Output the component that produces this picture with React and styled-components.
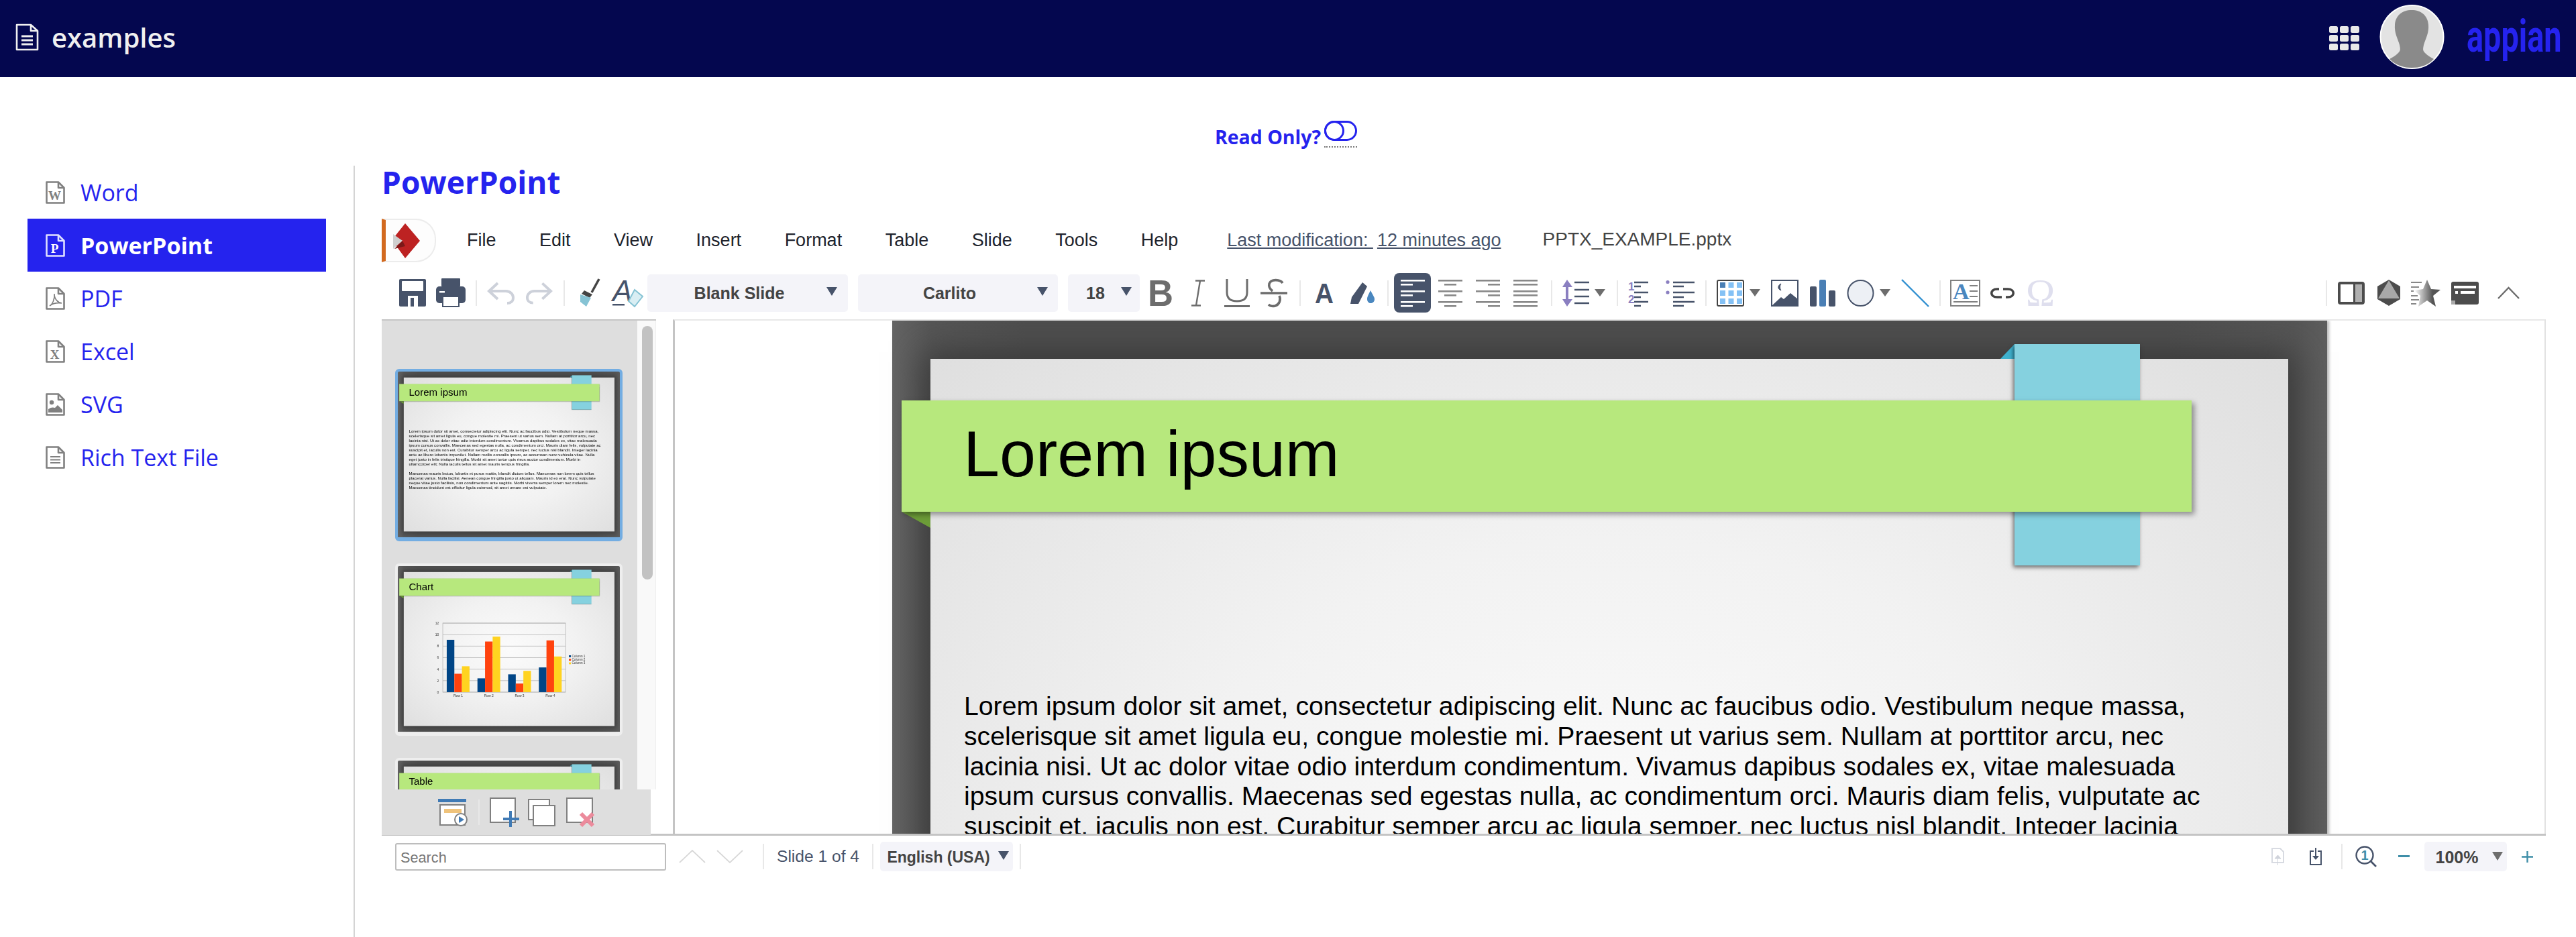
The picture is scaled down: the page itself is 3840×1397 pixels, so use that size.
import React from "react";
import styled, { createGlobalStyle } from "styled-components";

const BLUE = "#2523ee";
const SLATE = "#47536a";
const GREY = "#6d6d6d";
const SCALE = 0.1552;

const Global = createGlobalStyle`
  html, body { margin: 0; padding: 0; background: #fff; }
  body { font-family: "Open Sans", sans-serif; width: 3840px; height: 1397px; overflow: hidden; }
`;

const TopBar = styled.header`
  display: flex;
  align-items: center;
  height: 115px;
  box-sizing: border-box;
  background: #04074f;
  color: #f0f0f0;
  padding: 0 28px 5px 23px;
`;
const AppName = styled.div`
  font-size: 40px;
  font-weight: 600;
  margin-left: 19px;
  margin-right: auto;
`;
const GridIcon = styled.svg`
  display: block;
  margin-top: 4px;
`;
const Avatar = styled.svg`
  display: block;
  margin: 0 33px 0 30px;
`;
const Logo = styled.div`
  width: 135px;
  height: 70px;
  color: ${BLUE};
  font: bold 66px/70px "Roboto", sans-serif;
  transform: scaleX(0.71);
  transform-origin: 0 50%;
  white-space: nowrap;
`;
const ToggleRow = styled.div`
  display: flex;
  justify-content: center;
  align-items: center;
  height: 132px;
  padding: 46px 6px 0 0;
  box-sizing: border-box;
  color: ${BLUE};
  font-size: 28.5px;
  font-weight: 700;
  gap: 5px;
`;
const ToggleBox = styled.span`
  display: block;
  padding-bottom: 8px;
  margin-top: -8px;
  border-bottom: 2px dotted #777;
`;
const ToggleIcon = styled.svg`
  display: block;
`;
const Main = styled.div`
  display: flex;
`;
const Sidebar = styled.nav`
  width: 529px;
  height: 1150px;
  box-sizing: border-box;
  padding-left: 41px;
  border-right: 2px solid #d4d4d4;
  flex: none;
`;
const NavItem = styled.div`
  display: flex;
  align-items: center;
  width: 445px;
  height: 79px;
  padding-left: 27px;
  box-sizing: border-box;
  gap: 23px;
  font-size: 34px;
  font-weight: ${(p) => (p.$active ? 700 : 400)};
  color: ${(p) => (p.$active ? "#fff" : BLUE)};
  background: ${(p) => (p.$active ? BLUE : "transparent")};
`;
const Content = styled.main`
  width: 3226px;
  margin-left: 40px;
`;
const Title = styled.h1`
  margin: 0;
  height: 79px;
  font-size: 46px;
  line-height: 48px;
  font-weight: 700;
  color: ${BLUE};
`;
const MenuRow = styled.div`
  display: flex;
  align-items: center;
  height: 65px;
  font: 27px "Liberation Sans", sans-serif;
  color: #20232c;
`;
const BrandTab = styled.div`
  display: flex;
  align-items: center;
  justify-content: center;
  width: 81px;
  height: 65px;
  box-sizing: border-box;
  background: #fdfdfd;
  border: 2px solid #ececec;
  border-left: 6px solid #d2691e;
  border-radius: 0 30px 30px 0;
  padding-right: 12px;
`;
const MenuList = styled.div`
  display: flex;
  gap: 64.5px;
  margin-left: 46px;
`;
const Modified = styled.div`
  margin-left: 73px;
  color: ${SLATE};
  & u + u { margin-left: 6px; }
`;
const FileName = styled.div`
  margin-left: 62px;
  margin-top: -4px;
  font-size: 28px;
  color: #444;
`;
const ToolBar = styled.div`
  display: flex;
  align-items: center;
  height: 85px;
  padding: 6px 39px 0 0;
  box-sizing: border-box;
`;
const Ico = styled.svg`
  display: block;
  flex: none;
  overflow: visible;
  margin-left: ${(p) => p.$ml || 0}px;
`;
const Sep = styled.div`
  flex: none;
  width: 2px;
  height: ${(p) => p.$h || 38}px;
  background: #e8e8e8;
  margin-left: ${(p) => p.$ml || 0}px;
`;
const Combo = styled.div`
  display: flex;
  align-items: center;
  justify-content: center;
  flex: none;
  position: relative;
  width: ${(p) => p.$w}px;
  height: ${(p) => p.$h || 56}px;
  margin-left: ${(p) => p.$ml || 0}px;
  padding: 2px ${(p) => p.$pr || 0}px 0 0;
  box-sizing: border-box;
  background: #f4f4f9;
  border-radius: 5px;
  font: bold ${(p) => p.$fs || 25}px "Liberation Sans", sans-serif;
  color: #444;
`;
const Caret = styled.span`
  position: absolute;
  right: ${(p) => p.$r}px;
  top: ${(p) => p.$t || 19}px;
  border-style: solid;
  border-width: 13px 8px 0;
  border-color: ${(p) => p.$c || SLATE} transparent transparent;
`;
const SmallCaret = styled.span`
  flex: none;
  margin-left: ${(p) => p.$ml || 0}px;
  border-style: solid;
  border-width: 11px 8px 0;
  border-color: ${GREY} transparent transparent;
`;
const Spacer = styled.div`
  margin-left: auto;
`;
const ActiveAlign = styled.div`
  display: flex;
  justify-content: center;
  align-items: center;
  flex: none;
  width: 55px;
  height: 59px;
  margin-left: ${(p) => p.$ml}px;
  background: ${SLATE};
  border-radius: 8px;
`;
const Work = styled.div`
  display: flex;
  height: 767px;
  border-bottom: 3px solid #c4c4c4;
`;
const Panel = styled.div`
  display: grid;
  grid-template-columns: 381px 28px;
  grid-template-rows: 699px 68px;
  width: 409px;
  flex: none;
  border-top: 2px solid #c6c6c6;
  box-sizing: border-box;
`;
const Thumbs = styled.div`
  background: #dedede;
  padding: 72px 0 0 20px;
  overflow: hidden;
  display: flex;
  flex-direction: column;
  gap: 33px;
`;
const Track = styled.div`
  background: #f9f9f9;
  border-right: 1px solid #eee;
  padding: 8px 0 0 7px;
`;
const Thumb = styled.div`
  flex: none;
  width: 339px;
  height: 257px;
  box-sizing: border-box;
  background: ${(p) => (p.$active ? "#73ade2" : "#eeeeee")};
  border-radius: 6px;
  border: 4px solid ${(p) => (p.$active ? "#73ade2" : "#eeeeee")};
  overflow: hidden;
  filter: blur(0.35px);
`;
const ThumbScale = styled.div`
  width: 2139px;
  transform: scale(${SCALE});
  transform-origin: 0 0;
`;
const ThumbBar = styled.div`
  width: 16px;
  height: 378px;
  border-radius: 8px;
  background: #c2c2c2;
`;
const PanelFoot = styled.div`
  grid-column: 1 / 2;
  background: #dedede;
  display: flex;
  align-items: center;
  padding-left: 84px;
  width: 401px;
  box-sizing: border-box;
`;
const Canvas = styled.div`
  flex: 1;
  margin-left: 25px;
  display: flex;
  justify-content: center;
  overflow: hidden;
  border-left: 3px solid #c4c4c4;
  border-right: 2px solid #e2e2e2;
  border-top: 2px solid #e8e8e8;
`;
const Slide = styled.div`
  position: relative;
  flex: none;
  width: 2139px;
  height: 1591px;
  font-family: "Liberation Sans", sans-serif;
  color: #000;
  background: linear-gradient(90deg, #646464 0, #555 60px, #4e4e4e 200px, #4e4e4e 1900px, #555 2090px, #5e5e5e 100%);
  box-shadow: 3px 0 4px #bbb;
`;
const Page = styled.div`
  position: absolute;
  left: 57px;
  top: 57px;
  right: 58px;
  bottom: 55px;
  background: radial-gradient(ellipse at 50% 50%, #fbfbfb 0%, #f2f2f2 45%, #dfdfdf 100%);
  box-shadow: 0 0 44px 10px #3a3a3a;
`;
const GreenBand = styled.div`
  position: absolute;
  left: 14px;
  top: 119px;
  width: 1923px;
  height: 166px;
  box-sizing: border-box;
  padding-left: 92px;
  background: #b7e87d;
  box-shadow: 4px 4px 8px rgba(0, 0, 0, 0.4);
  font-size: 97px;
  line-height: 160px;
`;
const BlueRibbon = styled.div`
  position: absolute;
  left: 1673px;
  top: 35px;
  width: 187px;
  height: 330px;
  background: #85d1df;
  box-shadow: -2px 3px 6px rgba(0, 0, 0, 0.55);
`;
const Fold = styled.svg`
  position: absolute;
  left: ${(p) => p.$x}px;
  top: ${(p) => p.$y}px;
`;
const Body = styled.div`
  position: absolute;
  left: 107px;
  top: 553px;
  font-size: 39.2px;
  line-height: 44.8px;
  white-space: nowrap;
  & p { margin: 0 0 45px; }
  & span { display: block; }
`;
const ChartWrap = styled.svg`
  position: absolute;
  left: 0;
  top: 0;
`;
const Status = styled.div`
  display: flex;
  align-items: center;
  height: 54px;
  padding: 8px 19px 0 20px;
  box-sizing: border-box;
  font: 24.6px "Liberation Sans", sans-serif;
`;
const Search = styled.div`
  flex: none;
  width: 404px;
  height: 41px;
  box-sizing: border-box;
  padding-left: 6px;
  border: 2px solid #bdbdbd;
  border-radius: 3px;
  color: #777;
  font-size: 21.7px;
  line-height: 39px;
`;
const SlideCount = styled.div`
  margin-left: 19px;
  color: ${SLATE};
`;

// the slide keeps the line breaks of the presentation
const paragraphs = [
  [
    "Lorem ipsum dolor sit amet, consectetur adipiscing elit. Nunc ac faucibus odio. Vestibulum neque massa,",
    "scelerisque sit amet ligula eu, congue molestie mi. Praesent ut varius sem. Nullam at porttitor arcu, nec",
    "lacinia nisi. Ut ac dolor vitae odio interdum condimentum. Vivamus dapibus sodales ex, vitae malesuada",
    "ipsum cursus convallis. Maecenas sed egestas nulla, ac condimentum orci. Mauris diam felis, vulputate ac",
    "suscipit et, iaculis non est. Curabitur semper arcu ac ligula semper, nec luctus nisl blandit. Integer lacinia",
    "ante ac libero lobortis imperdiet. Nullam mollis convallis ipsum, ac accumsan nunc vehicula vitae. Nulla",
    "eget justo in felis tristique fringilla. Morbi sit amet tortor quis risus auctor condimentum. Morbi in",
    "ullamcorper elit; Nulla iaculis tellus sit amet mauris tempus fringilla.",
  ],
  [
    "Maecenas mauris lectus, lobortis et purus mattis, blandit dictum tellus. Maecenas non lorem quis tellus",
    "placerat varius. Nulla facilisi. Aenean congue fringilla justo ut aliquam. Mauris id ex erat. Nunc vulputate",
    "neque vitae justo facilisis, non condimentum ante sagittis. Morbi viverra semper lorem nec molestie.",
    "Maecenas tincidunt est efficitur ligula euismod, sit amet ornare est vulputate.",
  ],
];

const chartData = [
  ["Row 1", 9.1, 3.2, 4.5],
  ["Row 2", 2.4, 8.8, 9.65],
  ["Row 3", 3.1, 1.5, 3.7],
  ["Row 4", 4.3, 9, 6.2],
];
const chartColors = ["#004586", "#ff420e", "#ffd320"];

function BodyText() {
  return (
    <Body>
      {paragraphs.map((para) => (
        <p key={para[0]}>
          {para.map((line) => <span key={line}>{line}</span>)}
        </p>
      ))}
    </Body>
  );
}

function Chart() {
  const y = (v) => 1211 - v * 55.25;
  return (
    <ChartWrap width="2139" height="1591" viewBox="0 0 2139 1591">
      {[0, 2, 4, 6, 8, 10, 12].map((v) => (
        <g key={v}>
          <line x1="432" x2="1611" y1={y(v)} y2={y(v)} stroke="#b3b3b3" strokeWidth="5" />
          <text x="395" y={y(v) + 12} fontSize="32" fill="#333" textAnchor="end">{v}</text>
        </g>
      ))}
      <rect x="432" y="548" width="1179" height="663" fill="none" stroke="#b3b3b3" strokeWidth="5" />
      {chartData.map((row, i) => (
        <g key={row[0]}>
          {row.slice(1).map((v, j) => (
            <rect key={j} x={470 + i * 295 + j * 73} y={y(v)} width="73" height={v * 55.25} fill={chartColors[j]} />
          ))}
          <text x={580 + i * 295} y="1258" fontSize="32" fill="#333" textAnchor="middle">{row[0]}</text>
        </g>
      ))}
      {chartColors.map((c, i) => (
        <g key={c}>
          <rect x="1643" y={857 + i * 34} width="20" height="18" fill={c} />
          <text x="1672" y={875 + i * 34} fontSize="30" fill="#333">Column {i + 1}</text>
        </g>
      ))}
    </ChartWrap>
  );
}

function SlideView({ title, children }) {
  return (
    <Slide>
      <Page />
      <Fold $x={1652} $y={35} width="21" height="22" viewBox="0 0 21 22">
        <polygon points="21,0 21,22 0,22" fill="#3fb2cf" />
      </Fold>
      <BlueRibbon />
      <Fold $x={14} $y={285} width="43" height="24" viewBox="0 0 43 24">
        <polygon points="0,0 43,0 43,24" fill="#6c9c38" />
      </Fold>
      <GreenBand>{title}</GreenBand>
      {children}
    </Slide>
  );
}

function DocIcon({ color, children }) {
  return (
    <Ico width="29" height="34" viewBox="0 0 29 34">
      <path d="M1.5 1.5H19L27.5 10V32.5H1.5Z M19 1.5V10H27.5" fill="none" stroke={color} strokeWidth="2.6" strokeLinejoin="round" />
      {children}
    </Ico>
  );
}

const Letter = ({ color, children }) => (
  <text x="13.5" y="28" textAnchor="middle" fontSize="19" fontWeight="bold" fontFamily="Liberation Serif, serif" fill={color}>{children}</text>
);

const nav = [
  ["Word", <Letter color="#808080">W</Letter>],
  ["PowerPoint", <Letter color="#fff">P</Letter>],
  ["PDF", <path d="M6 28C10 26 14 18 13 10C13 18 18 23 24 24C17 23 10 25 6 28Z" fill="none" stroke="#808080" strokeWidth="1.6" />],
  ["Excel", <Letter color="#808080">X</Letter>],
  ["SVG", <g fill="#808080"><circle cx="9" cy="14" r="3.2" /><path d="M4 29V24C8 21 11 21 14 22L18 18L25 25V29Z" /></g>],
  ["Rich Text File", <path d="M7 16H22M7 20.5H22M7 25H22" stroke="#808080" strokeWidth="1.8" />],
];

const AlignLines = ({ color, kind }) => {
  const rows = [1, 7, 17, 23, 33, 39];
  return (
    <Ico $ml={kind.ml} width="36" height="40" viewBox="0 0 36 40">
      {rows.map((r, i) => {
        const long = i % 2 === 0 || kind.name === "justify";
        const w = long ? 36 : 18;
        const x = kind.name === "left" ? 0 : kind.name === "center" ? (36 - w) / 2 : kind.name === "right" ? 36 - w : 0;
        return <rect key={r} x={x} y={r - 1} width={w} height="2.6" fill={color} />;
      })}
    </Ico>
  );
};

export default function App() {
  return (
    <>
      <Global />
      <TopBar>
        <svg width="35" height="41" viewBox="0 0 35 41">
          <path d="M2 2H23L33 11V39H2Z M23 2V11H33" fill="none" stroke="#f0f0f0" strokeWidth="2.6" strokeLinejoin="round" />
          <path d="M9 19H26M9 25H26M9 31H26" stroke="#f0f0f0" strokeWidth="3" />
        </svg>
        <AppName>examples</AppName>
        <GridIcon width="45" height="36" viewBox="0 0 45 36">
          {[0, 1, 2].map((r) =>
            [0, 1, 2].map((c) => <rect key={`${r}${c}`} x={c * 16} y={r * 13} width="13" height="10" rx="2.5" fill="#e9e9e9" />)
          )}
        </GridIcon>
        <Avatar width="97" height="96" viewBox="0 0 97 96">
          <circle cx="48.5" cy="48" r="47" fill="#e3e3e3" stroke="#fff" strokeWidth="2" />
          <path d="M48 8C34 8 24 16 23 30C22 42 27 50 30 60C31 66 32 68 28 72C24 76 20 78 15 81C25 91 37 94 48 94C60 94 72 91 81 81C76 78 72 76 68 72C64 68 65 66 66 60C69 50 74 42 73 30C72 16 62 8 48 8Z" fill="#8a8a8a" />
        </Avatar>
        <Logo>appian</Logo>
      </TopBar>

      <ToggleRow>
        Read Only?
        <ToggleBox>
          <ToggleIcon width="49" height="30" viewBox="0 0 49 30">
            <rect x="1.5" y="1.5" width="46" height="27" rx="13.5" fill="none" stroke={BLUE} strokeWidth="3" />
            <circle cx="15" cy="15" r="13.5" fill="none" stroke={BLUE} strokeWidth="3" />
          </ToggleIcon>
        </ToggleBox>
      </ToggleRow>

      <Main>
        <Sidebar>
          {nav.map(([label, glyph]) => (
            <NavItem key={label} $active={label === "PowerPoint"}>
              <DocIcon color={label === "PowerPoint" ? "#dfe0ff" : "#808080"}>{glyph}</DocIcon>
              {label}
            </NavItem>
          ))}
        </Sidebar>

        <Content>
          <Title>PowerPoint</Title>

          <MenuRow>
            <BrandTab>
              <svg width="40" height="52" viewBox="0 0 40 52">
                <polygon points="18,0 40,26 18,52 2,30 14,26 2,20" fill="#bd2222" />
                <polygon points="0,16 14,26 0,38" fill="#cfcfcf" />
                <polygon points="14,26 18,34 2,38" fill="#7c1818" />
              </svg>
            </BrandTab>
            <MenuList>
              <span>File</span>
              <span>Edit</span>
              <span>View</span>
              <span>Insert</span>
              <span>Format</span>
              <span>Table</span>
              <span>Slide</span>
              <span>Tools</span>
              <span>Help</span>
            </MenuList>
            <Modified>
              <u>Last modification: </u>
              <u>12 minutes ago</u>
            </Modified>
            <FileName>PPTX_EXAMPLE.pptx</FileName>
          </MenuRow>

          <ToolBar>
            <Ico $ml={26} width="40" height="41" viewBox="0 0 40 41">
              <rect width="40" height="41" rx="2" fill={SLATE} />
              <rect x="4" y="3" width="32" height="15" rx="1" fill="#fff" />
              <rect x="13" y="25" width="15" height="16" fill="#fff" />
              <rect x="17" y="28" width="5" height="13" fill={SLATE} />
            </Ico>
            <Ico $ml={15} width="44" height="43" viewBox="0 0 44 43">
              <rect x="8" width="28" height="12" rx="1" fill={SLATE} />
              <rect y="12" width="44" height="25" rx="5" fill={SLATE} />
              <rect x="5" y="19" width="8" height="2.5" fill="#fff" />
              <rect x="10" y="27" width="24" height="15" fill="#fff" stroke={SLATE} strokeWidth="2" />
            </Ico>
            <Sep $ml={15} />
            <Ico $ml={14} width="43" height="36" viewBox="0 0 43 36">
              <path d="M17 3L4 15L17 27M4 15H29C36 15 40 20 40 25C40 30 36 33 31 33" fill="none" stroke="#cdd1da" strokeWidth="4" />
            </Ico>
            <Ico $ml={15} width="42" height="36" viewBox="0 0 43 36">
              <path d="M26 3L39 15L26 27M39 15H14C7 15 3 20 3 25C3 30 7 33 12 33" fill="none" stroke="#cdd1da" strokeWidth="4" />
            </Ico>
            <Sep $ml={15} />
            <Ico $ml={21} width="32" height="41" viewBox="0 0 32 41">
              <path d="M30 0L19 20" stroke="#444" strokeWidth="3.5" />
              <polygon points="8,17 20,23 16,28 4,22" fill="#444" />
              <polygon points="2,23 18,28 11,41 2,34" fill="#86c3d4" />
            </Ico>
            <Ico $ml={18} width="45" height="41" viewBox="0 0 45 41">
              <text x="0" y="33" fontSize="44" fontStyle="italic" fontFamily="Liberation Sans, sans-serif" fill={SLATE}>A</text>
              <rect x="0" y="37" width="18" height="2.5" fill={SLATE} />
              <polygon points="33,16 45,26 33,41 24,33" fill="#d9eef3" stroke="#86c3d4" strokeWidth="2" />
            </Ico>
            <Combo $ml={7} $w={299} $pr={25}>Blank Slide<Caret $r={16} /></Combo>
            <Combo $ml={15} $w={298} $pr={25}>Carlito<Caret $r={15} /></Combo>
            <Combo $ml={15} $w={107} $pr={25}>18<Caret $r={12} /></Combo>
            <Ico $ml={14} width="34" height="40" viewBox="0 0 34 40">
              <text x="-2" y="39" fontSize="55" fontWeight="bold" textLength="38" lengthAdjust="spacingAndGlyphs" fontFamily="Liberation Sans, sans-serif" fill={GREY}>B</text>
            </Ico>
            <Ico $ml={29} width="20" height="40" viewBox="0 0 20 40">
              <path d="M6 1.5H20M0 38.5H14M13 1.5L7 38.5" stroke={GREY} strokeWidth="2.4" fill="none" />
            </Ico>
            <Ico $ml={29} width="38" height="42" viewBox="0 0 38 42">
              <path d="M4 0V20C4 30 11 33 19 33C27 33 34 30 34 20V0M0 40.5H38" stroke={GREY} strokeWidth="3" fill="none" />
            </Ico>
            <Ico $ml={16} width="40" height="42" viewBox="0 0 40 42">
              <path d="M33 6C30 1 16 -1 13 7C12 11 14 15 18 18M0 21H40M28 25C31 31 28 38 22 40C18 41 14 40 12 38" stroke={GREY} strokeWidth="3.6" fill="none" />
            </Ico>
            <Sep $ml={18} />
            <Ico $ml={21} width="28" height="32" viewBox="0 0 28 32">
              <text x="14" y="31" fontSize="42" textAnchor="middle" fontWeight="bold" textLength="28" lengthAdjust="spacingAndGlyphs" fontFamily="Liberation Sans, sans-serif" fill={SLATE}>A</text>
            </Ico>
            <Ico $ml={25} width="36" height="32" viewBox="0 0 36 32">
              <polygon points="18,0 25,6 12,32 0,32 2,22" fill={SLATE} />
              <path d="M30 12C26 20 25 22 25 25C25 29 28 31 30 31C33 31 36 29 36 25C36 22 34 20 30 12Z" fill="#4a87bf" />
            </Ico>
            <Sep $ml={19} />
            <ActiveAlign $ml={8}>
              <AlignLines color="#fff" kind={{ name: "left" }} />
            </ActiveAlign>
            <AlignLines color="#888" kind={{ name: "center", ml: 11 }} />
            <AlignLines color="#888" kind={{ name: "right", ml: 20 }} />
            <AlignLines color="#888" kind={{ name: "justify", ml: 20 }} />
            <Sep $ml={20} />
            <Ico $ml={15} width="40" height="40" viewBox="0 0 40 40">
              <path d="M7 0L15 11H9V29H15L7 40L0 29H5V11H0Z" fill="#8a7fc0" />
              <path d="M18 4H40M18 15H40M18 25H40M18 35H40" stroke={SLATE} strokeWidth="2.6" />
            </Ico>
            <SmallCaret $ml={8} />
            <Sep $ml={17} />
            <Ico $ml={15} width="49" height="40" viewBox="0 0 49 40">
              <text x="0" y="16" fontSize="17" fontWeight="bold" fontFamily="Liberation Sans, sans-serif" fill="#8a7fc0">1</text>
              <text x="0" y="35" fontSize="17" fontWeight="bold" fontFamily="Liberation Sans, sans-serif" fill="#8a7fc0">2</text>
              <path d="M9 4H30M9 10H19M9 19H30M9 26H19M9 33H30M9 39H19" stroke={SLATE} strokeWidth="2.4" />
            </Ico>
            <Ico $ml={7} width="43" height="40" viewBox="0 0 43 40">
              <circle cx="3" cy="3.5" r="2.6" fill="#8a7fc0" />
              <circle cx="3" cy="19" r="2.6" fill="#8a7fc0" />
              <path d="M11 4H43M11 10H27M11 19H43M11 26H27M11 33H43M11 39H27" stroke={SLATE} strokeWidth="2.4" />
            </Ico>
            <Sep $ml={16} />
            <Ico $ml={15} width="41" height="40" viewBox="0 0 41 40">
              <rect x="1" y="1" width="39" height="38" rx="2" fill="#fff" stroke="#444" strokeWidth="2" />
              {[0, 1, 2].map((r) =>
                [0, 1, 2].map((c) => (
                  <rect key={`${r}${c}`} x={5 + c * 12.5} y={4 + r * 12} width="8" height="8" fill={r + c === 0 ? "#4a7fb5" : "#84c1f5"} />
                ))
              )}
            </Ico>
            <SmallCaret $ml={8} />
            <Ico $ml={16} width="41" height="40" viewBox="0 0 41 40">
              <rect x="1" y="1" width="39" height="38" fill="#fff" stroke={SLATE} strokeWidth="2" />
              <path d="M1 39L15 26L19 29L29 20L40 29V39Z" fill={SLATE} />
              <path d="M15 6C10 8 9 14 15 16C13 13 13 9 15 6Z" fill={SLATE} stroke={SLATE} />
            </Ico>
            <Ico $ml={17} width="39" height="40" viewBox="0 0 39 40">
              <rect y="10" width="10" height="30" rx="2" fill={SLATE} />
              <rect x="14" width="10" height="40" rx="2" fill="#4a7fb5" />
              <rect x="28" y="16" width="10" height="24" rx="2" fill={SLATE} />
            </Ico>
            <Ico $ml={16} width="41" height="40" viewBox="0 0 41 40">
              <circle cx="20.5" cy="20" r="19" fill="#edf0f5" stroke={SLATE} strokeWidth="2" />
            </Ico>
            <SmallCaret $ml={8} />
            <Ico $ml={17} width="40" height="40" viewBox="0 0 40 40">
              <path d="M0 0L40 40" stroke="#2f8fd0" strokeWidth="2.4" />
            </Ico>
            <Sep $ml={16} />
            <Ico $ml={14} width="45" height="40" viewBox="0 0 45 40">
              <rect x="1" y="1" width="43" height="38" fill="#fff" stroke="#808080" strokeWidth="2" />
              <text x="4" y="29" fontSize="34" fontWeight="bold" fontFamily="Liberation Serif, serif" fill="#4a87bf">A</text>
              <path d="M29 9H41M29 17H41M29 25H41M5 33H41" stroke="#808080" strokeWidth="2" />
            </Ico>
            <Ico $ml={15} width="36" height="18" viewBox="0 0 36 18">
              <path d="M13 3H10C-1 3 -1 15 10 15H17M23 15H26C37 15 37 3 26 3H19" fill="none" stroke="#444" strokeWidth="3.6" />
            </Ico>
            <Ico $ml={18} width="41" height="40" viewBox="0 0 41 40">
              <text x="20.5" y="39" fontSize="58" textAnchor="middle" fontFamily="Liberation Serif, serif" fill="#dfdfee">Ω</text>
            </Ico>
            <Spacer />
            <Sep />
            <Ico $ml={16} width="40" height="34" viewBox="0 0 40 34">
              <rect x="2" y="2" width="36" height="30" rx="2" fill="#fff" stroke="#4c4c4c" strokeWidth="4" />
              <rect x="26" y="4" width="10" height="26" fill="#b0b0b0" />
              <rect x="23" y="2" width="3" height="30" fill="#4c4c4c" />
            </Ico>
            <Ico $ml={19} width="34" height="39" viewBox="0 0 34 39">
              <polygon points="17,0 34,10 34,29 17,39 0,29 0,10" fill="#4c4c4c" />
              <polygon points="17,1 33,28 1,28" fill="#a8a8a8" />
            </Ico>
            <Ico $ml={16} width="44" height="40" viewBox="0 0 44 40">
              <defs>
                <linearGradient id="starFade" x1="0" x2="1" y1="0" y2="0">
                  <stop offset="0" stopColor="#fff" />
                  <stop offset="0.7" stopColor="#555" />
                </linearGradient>
              </defs>
              <path d="M0 4H16M0 11H12M0 17H4M0 24H10M0 30H12M0 36H8" stroke="#888" strokeWidth="2" />
              <polygon points="24,0 30,14 44,15 33,24 37,40 24,31 11,40 14,24 5,16 18,14" fill="url(#starFade)" />
            </Ico>
            <Ico $ml={16} width="41" height="34" viewBox="0 0 41 34">
              <rect width="41" height="34" rx="3" fill="#4c4c4c" />
              <rect x="4" y="6" width="33" height="4" fill="#fff" />
              <rect x="6" y="14" width="4" height="4" fill="#fff" />
              <rect x="14" y="14" width="21" height="4" fill="#fff" />
              <rect y="28" width="6" height="6" fill="#aaa" />
            </Ico>
            <Ico $ml={28} width="33" height="19" viewBox="0 0 33 19">
              <path d="M1 18L16.5 2L32 18" fill="none" stroke="#6d6d6d" strokeWidth="2.4" />
            </Ico>
          </ToolBar>

          <Work>
            <Panel>
              <Thumbs>
                <Thumb $active>
                  <ThumbScale>
                    <SlideView title="Lorem ipsum"><BodyText /></SlideView>
                  </ThumbScale>
                </Thumb>
                <Thumb>
                  <ThumbScale>
                    <SlideView title="Chart"><Chart /></SlideView>
                  </ThumbScale>
                </Thumb>
                <Thumb>
                  <ThumbScale>
                    <SlideView title="Table" />
                  </ThumbScale>
                </Thumb>
              </Thumbs>
              <Track><ThumbBar /></Track>
              <PanelFoot>
                <Ico width="45" height="41" viewBox="0 0 45 41">
                  <rect width="42" height="5" fill="#3f7ab5" />
                  <rect x="3" y="9" width="37" height="30" fill="#fff" stroke="#808080" strokeWidth="2" />
                  <rect x="9" y="15" width="26" height="6" fill="#efc37c" />
                  <circle cx="34" cy="31" r="9" fill="#fff" stroke="#808080" strokeWidth="2" />
                  <polygon points="31,26 39,31 31,36" fill="#3f7ab5" />
                </Ico>
                <Sep $ml={15} $h={38} />
                <Ico $ml={15} width="45" height="44" viewBox="0 0 45 44">
                  <rect x="1" y="1" width="37" height="36" fill="#fff" stroke="#808080" strokeWidth="2" />
                  <path d="M31 20V44M20 32H44" stroke="#3f7ab5" strokeWidth="4" />
                </Ico>
                <Ico $ml={12} width="41" height="41" viewBox="0 0 41 41">
                  <rect x="1" y="1" width="31" height="30" fill="#fff" stroke="#808080" strokeWidth="2" />
                  <rect x="8" y="10" width="32" height="30" fill="#fff" stroke="#808080" strokeWidth="2" />
                </Ico>
                <Ico $ml={16} width="42" height="44" viewBox="0 0 42 44">
                  <rect x="1" y="1" width="38" height="36" fill="#fff" stroke="#808080" strokeWidth="2" />
                  <path d="M22 24L40 42M40 24L22 42" stroke="#ec8b9c" strokeWidth="6" />
                </Ico>
              </PanelFoot>
            </Panel>
            <Canvas>
              <SlideView title="Lorem ipsum"><BodyText /></SlideView>
            </Canvas>
          </Work>

          <Status>
            <Search>Search</Search>
            <Ico $ml={19} width="40" height="20" viewBox="0 0 40 20">
              <path d="M1 19L20 1L39 19" fill="none" stroke="#d8d8d8" strokeWidth="1.8" />
            </Ico>
            <Ico $ml={16} width="40" height="20" viewBox="0 0 40 20">
              <path d="M1 1L20 19L39 1" fill="none" stroke="#d8d8d8" strokeWidth="1.8" />
            </Ico>
            <Sep $ml={29} />
            <SlideCount>Slide 1 of 4</SlideCount>
            <Sep $ml={19} />
            <Combo $ml={10} $w={198} $h={44} $fs={23} $pr={24}>English (USA)<Caret $r={6} $t={14} /></Combo>
            <Sep $ml={10} />
            <Spacer />
            <Ico width="19" height="26" viewBox="0 0 19 26">
              <path d="M1 1H13L18 6V22H1Z" fill="none" stroke="#d8dbe2" strokeWidth="2" />
              <path d="M9.5 26V13M5 16L9.5 11L14 16Z" fill="#cfd3db" stroke="#cfd3db" />
            </Ico>
            <Ico $ml={38} width="18" height="26" viewBox="0 0 18 26">
              <path d="M6 5H1V25H17V5H12M9 0V12" fill="none" stroke={SLATE} strokeWidth="2" />
              <polygon points="4,12 14,12 9,18" fill={SLATE} />
            </Ico>
            <Sep $ml={29} />
            <Ico $ml={19} width="32" height="32" viewBox="0 0 32 32">
              <circle cx="14" cy="14" r="12.5" fill="none" stroke={SLATE} strokeWidth="2.4" />
              <path d="M23 23L31 31" stroke={SLATE} strokeWidth="2.6" />
              <text x="14" y="21" fontSize="20" fontWeight="bold" textAnchor="middle" fontFamily="Liberation Sans, sans-serif" fill="#3f8ea8">1</text>
            </Ico>
            <Ico $ml={32} width="17" height="4" viewBox="0 0 17 4">
              <rect width="17" height="3" fill="#3f8ea8" />
            </Ico>
            <Combo $ml={22} $w={123} $h={44} $pr={26}>100%<Caret $r={6} $t={15} $c={GREY} /></Combo>
            <Ico $ml={22} width="17" height="17" viewBox="0 0 17 17">
              <path d="M8.5 0V17M0 8.5H17" stroke="#3f8ea8" strokeWidth="2.4" />
            </Ico>
          </Status>
        </Content>
      </Main>
    </>
  );
}
